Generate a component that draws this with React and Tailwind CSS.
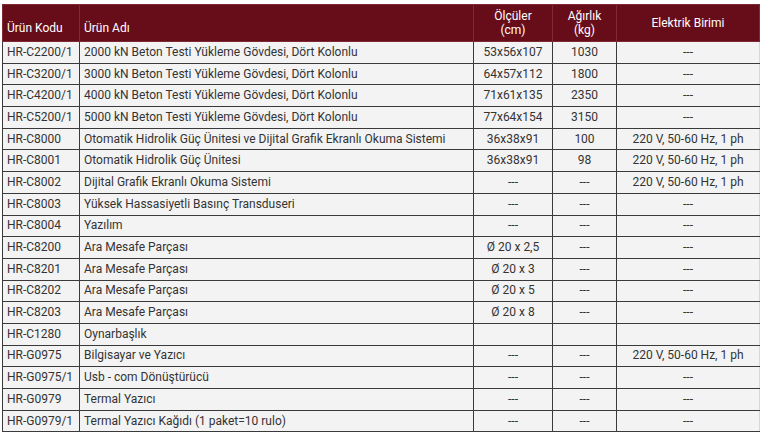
const rows = [
  ['HR-C2200/1', '2000 kN Beton Testi Yükleme Gövdesi, Dört Kolonlu', '53x56x107', '1030', '---'],
  ['HR-C3200/1', '3000 kN Beton Testi Yükleme Gövdesi, Dört Kolonlu', '64x57x112', '1800', '---'],
  ['HR-C4200/1', '4000 kN Beton Testi Yükleme Gövdesi, Dört Kolonlu', '71x61x135', '2350', '---'],
  ['HR-C5200/1', '5000 kN Beton Testi Yükleme Gövdesi, Dört Kolonlu', '77x64x154', '3150', '---'],
  ['HR-C8000', 'Otomatik Hidrolik Güç Ünitesi ve Dijital Grafik Ekranlı Okuma Sistemi', '36x38x91', '100', '220 V, 50-60 Hz, 1 ph'],
  ['HR-C8001', 'Otomatik Hidrolik Güç Ünitesi', '36x38x91', '98', '220 V, 50-60 Hz, 1 ph'],
  ['HR-C8002', 'Dijital Grafik Ekranlı Okuma Sistemi', '---', '---', '220 V, 50-60 Hz, 1 ph'],
  ['HR-C8003', 'Yüksek Hassasiyetli Basınç Transduseri', '---', '---', '---'],
  ['HR-C8004', 'Yazılım', '---', '---', '---'],
  ['HR-C8200', 'Ara Mesafe Parçası', 'Ø 20 x 2,5', '---', '---'],
  ['HR-C8201', 'Ara Mesafe Parçası', 'Ø 20 x 3', '---', '---'],
  ['HR-C8202', 'Ara Mesafe Parçası', 'Ø 20 x 5', '---', '---'],
  ['HR-C8203', 'Ara Mesafe Parçası', 'Ø 20 x 8', '---', '---'],
  ['HR-C1280', 'Oynarbaşlık', '', '', ''],
  ['HR-G0975', 'Bilgisayar ve Yazıcı', '---', '---', '220 V, 50-60 Hz, 1 ph'],
  ['HR-G0975/1', 'Usb - com Dönüştürücü', '---', '---', '---'],
  ['HR-G0979', 'Termal Yazıcı', '---', '---', '---'],
  ['HR-G0979/1', 'Termal Yazıcı Kağıdı (1 paket=10 rulo)', '---', '---', '---'],
];

const App = () => {
  return (
    <div className="w-[765px] h-[437px] bg-white pt-[4px] pl-[2px] font-['Roboto',sans-serif] text-[12px] text-[#333]">
      <table className="w-[757px] table-fixed border-collapse">
        <colgroup>
          <col className="w-[77px]" />
          <col className="w-[394px]" />
          <col className="w-[79px]" />
          <col className="w-[64px]" />
          <col className="w-[143px]" />
        </colgroup>
        <thead>
          <tr className="h-[37px] bg-[#670d1a] text-white">
            <th className="border border-[#7d2a35] px-[4px] pt-[10px] text-left align-middle font-normal leading-[15px]">Ürün Kodu</th>
            <th className="border border-[#7d2a35] px-[4px] pt-[10px] text-left align-middle font-normal leading-[15px]">Ürün Adı</th>
            <th className="border border-[#7d2a35] px-[2px] text-center align-middle font-normal leading-[14px]">Ölçüler<br />(cm)</th>
            <th className="border border-[#7d2a35] px-[2px] text-center align-middle font-normal leading-[14px]">Ağırlık<br />(kg)</th>
            <th className="border border-[#7d2a35] px-[2px] text-center align-middle font-normal leading-[15px]">Elektrik Birimi</th>
          </tr>
        </thead>
        <tbody>
          {rows.map((r) => (
            <tr key={r[0]} className="h-[21.7px] bg-[#f3f3f3]">
              <td className="border border-[#3a3a3a] px-[4px] py-0 leading-[15px] whitespace-nowrap">{r[0]}</td>
              <td className="border border-[#3a3a3a] px-[4px] py-0 leading-[15px] whitespace-nowrap">{r[1]}</td>
              <td className="border border-[#3a3a3a] px-[2px] py-0 text-center leading-[15px]">{r[2]}</td>
              <td className="border border-[#3a3a3a] px-[2px] py-0 text-center leading-[15px]">{r[3]}</td>
              <td className="border border-[#3a3a3a] border-r-[#d8d8d8] px-[2px] py-0 text-center leading-[15px]">{r[4]}</td>
            </tr>
          ))}
        </tbody>
      </table>
    </div>
  );
};

export default App;
